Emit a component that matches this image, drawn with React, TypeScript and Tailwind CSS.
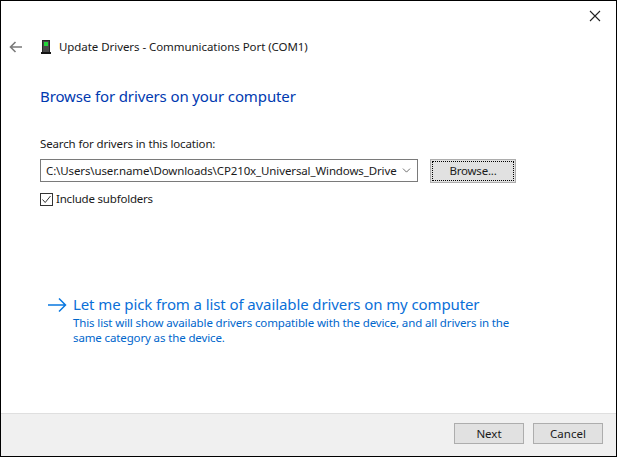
import { ChevronDown } from 'lucide-react';

const font = { fontFamily: '"Noto Sans", sans-serif' };

function PortIcon() {
  return (
    <svg width="10" height="14" viewBox="0 0 10 14" className="shrink-0">
      <rect x="1" y="0" width="8" height="13" fill="#262626" />
      <rect x="2" y="1" width="6" height="11" fill="#484848" />
      <rect x="3" y="2" width="4" height="4" fill="#22d43a" />
      <rect x="0" y="12" width="10" height="2" fill="#141414" />
    </svg>
  );
}

export default function App() {
  return (
    <div
      className="w-[617px] h-[457px] bg-white border border-black flex flex-col text-[12px] text-[#1a1a1a] overflow-hidden"
      style={font}
    >
      <div className="h-[8px] flex justify-end pr-[15px] pt-[9px]">
        <svg width="12" height="12" viewBox="0 0 12 12" className="shrink-0">
          <path d="M1 1 L11 11 M11 1 L1 11" stroke="#222" strokeWidth="1.1" fill="none" />
        </svg>
      </div>

      <div className="flex-1 flex flex-col">
        <div className="flex items-center mt-[28px] pl-[8px] h-[18px]">
          <svg width="14" height="12" viewBox="0 0 14 12" className="shrink-0">
            <path d="M13 6 H2 M6.5 1 L1.5 6 L6.5 11" stroke="#7a7a7a" strokeWidth="1.6" fill="none" />
          </svg>
          <div className="ml-[18px] flex">
            <PortIcon />
          </div>
          <span className="ml-[8px] text-[11.5px] tracking-[-0.06px] leading-[18px]">
            Update Drivers - Communications Port (COM1)
          </span>
        </div>

        <h1 className="ml-[39px] mt-[29px] text-[15px] leading-[22px] text-[#0039b0] tracking-[-0.12px]">
          Browse for drivers on your computer
        </h1>

        <p className="ml-[39px] mt-[29px] leading-[16px] tracking-[-0.14px] text-[11.5px]">
          Search for drivers in this location:
        </p>

        <div className="flex items-center ml-[39px] mt-[6px]">
          <div className="w-[378px] h-[23px] bg-white border border-[#7a7a7a] flex items-center pl-[5px] pr-[4px]">
            <span className="flex-1 overflow-hidden whitespace-nowrap text-[11.5px] tracking-[-0.12px]">
              C:\Users\user.name\Downloads\CP210x_Universal_Windows_Drive
            </span>
            <ChevronDown size={13} strokeWidth={1.2} color="#222" className="shrink-0 ml-[2px]" />
          </div>
          <button className="ml-[12px] w-[86px] h-[24px] bg-[#e1e1e1] border border-[#adadad] p-[1px] mt-[1px]">
            <span className="w-full h-full flex items-center justify-center border border-dotted border-black text-[11.5px] tracking-[-0.2px]">
              Browse...
            </span>
          </button>
        </div>

        <label className="flex items-center ml-[39px] mt-[8px] h-[16px]">
          <span className="w-[13px] h-[13px] border border-[#333] flex items-center justify-center bg-white">
            <svg width="11" height="11" viewBox="0 0 11 11">
              <path d="M1.5 5.5 L4.2 8.5 L9.5 2" stroke="#333" strokeWidth="1" fill="none" />
            </svg>
          </span>
          <span className="ml-[3px] text-[11.5px] tracking-[-0.2px]">Include subfolders</span>
        </label>

        <div className="flex ml-[47px] mt-[86px]">
          <svg width="19" height="16" viewBox="0 0 19 16" className="shrink-0 mt-[4px]">
            <path d="M0 8 H17 M11 1.5 L17.5 8 L11 14.5" stroke="#0a78e0" strokeWidth="1.5" fill="none" />
          </svg>
          <div className="ml-[6px] text-[#0066cc]">
            <div className="text-[15px] leading-[22px] tracking-[-0.1px] text-[#0a6fd8]">
              Let me pick from a list of available drivers on my computer
            </div>
            <div className="w-[450px] text-[11.5px] leading-[15px] tracking-[-0.13px]">
              This list will show available drivers compatible with the device, and all drivers in the same category as the device.
            </div>
          </div>
        </div>
      </div>

      <div className="h-[43px] bg-[#f0f0f0] border-t border-[#dfdfdf] flex items-start justify-end pt-[9px] pr-[13px] gap-[9px]">
        <button className="w-[70px] h-[21px] bg-[#e1e1e1] border border-[#adadad] text-[11.5px] leading-none">Next</button>
        <button className="w-[70px] h-[21px] bg-[#e1e1e1] border border-[#adadad] text-[11.5px] leading-none">Cancel</button>
      </div>
    </div>
  );
}
